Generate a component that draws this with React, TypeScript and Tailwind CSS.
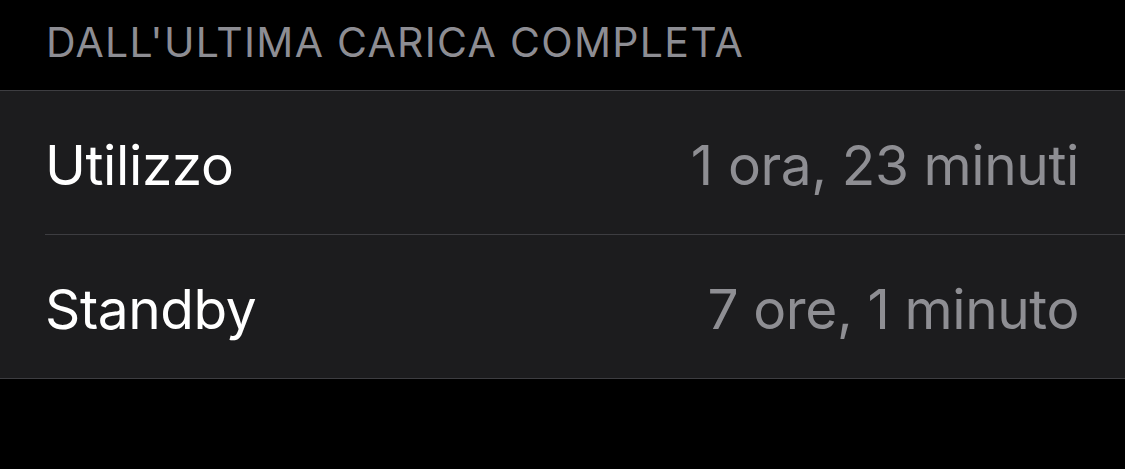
import React from "react";

const rows = [
  { label: "Utilizzo", value: "1 ora, 23 minuti" },
  { label: "Standby", value: "7 ore, 1 minuto" },
];

const App = () => {
  return (
    <div
      className="min-h-screen w-full bg-black"
      style={{ fontFamily: "Inter, 'Noto Sans', sans-serif" }}
    >
      <div className="h-[90px] flex items-end pl-[46px] pb-[27px]">
        <p className="text-[41px] leading-none text-[#8d8d93] tracking-[1.3px]">
          DALL'ULTIMA CARICA COMPLETA
        </p>
      </div>

      <div className="bg-[#1c1c1e] border-y border-[#3d3d41] pl-[45px]">
        {rows.map((row, i) => (
          <div
            key={row.label}
            className={
              "flex items-center justify-between pr-[46px] pt-[6px] " +
              (i < rows.length - 1 ? "h-[144px] border-b border-[#3d3d41]" : "h-[143px]")
            }
          >
            <span className="text-[55px] leading-none text-white tracking-[-0.4px]">
              {row.label}
            </span>
            <span className="text-[55px] leading-none text-[#8e8e93] tracking-[-0.4px]">
              {row.value}
            </span>
          </div>
        ))}
      </div>
    </div>
  );
};

export default App;
